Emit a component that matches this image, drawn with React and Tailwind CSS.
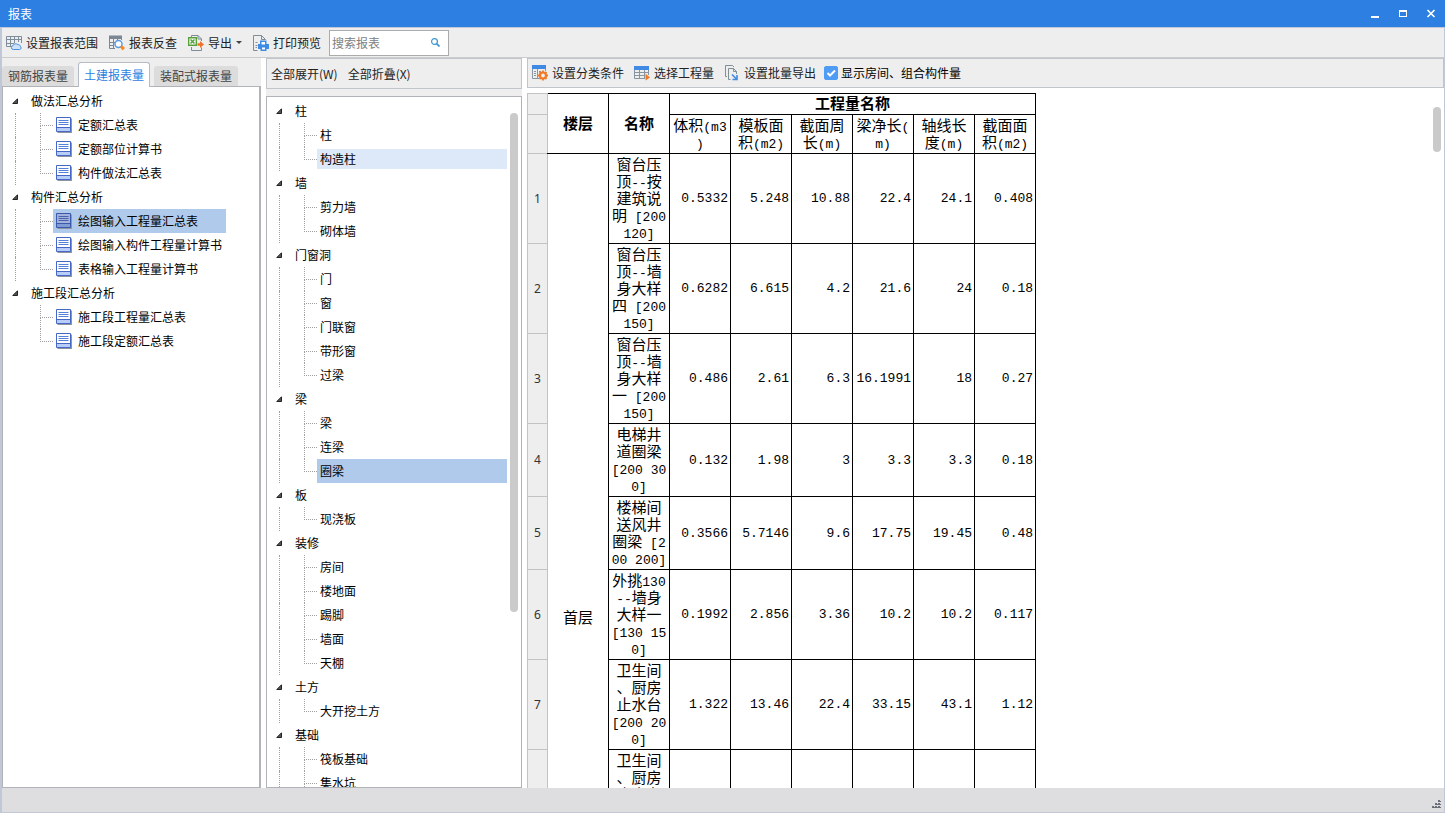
import React, { useState } from "react";

const reportGroups = [
    { name: "做法汇总分析", items: ["定额汇总表", "定额部位计算书", "构件做法汇总表"] },
    { name: "构件汇总分析", items: ["绘图输入工程量汇总表", "绘图输入构件工程量计算书", "表格输入工程量计算书"] },
    { name: "施工段汇总分析", items: ["施工段工程量汇总表", "施工段定额汇总表"], end: true },
];

const componentGroups = [
    { name: "柱", items: ["柱", "构造柱"] },
    { name: "墙", items: ["剪力墙", "砌体墙"] },
    { name: "门窗洞", items: ["门", "窗", "门联窗", "带形窗", "过梁"] },
    { name: "梁", items: ["梁", "连梁", "圈梁"] },
    { name: "板", items: ["现浇板"] },
    { name: "装修", items: ["房间", "楼地面", "踢脚", "墙面", "天棚"] },
    { name: "土方", items: ["大开挖土方"] },
    { name: "基础", items: ["筏板基础", "集水坑"], open: true },
];

const columns = [
    ["体积(m3", ")"],
    ["模板面", "积(m2)"],
    ["截面周", "长(m)"],
    ["梁净长(", "m)"],
    ["轴线长", "度(m)"],
    ["截面面", "积(m2)"],
];

const rows = [
    { name: ["窗台压", "顶--按", "建筑说", "明 [200", "120]"], values: ["0.5332", "5.248", "10.88", "22.4", "24.1", "0.408"] },
    { name: ["窗台压", "顶--墙", "身大样", "四 [200", "150]"], values: ["0.6282", "6.615", "4.2", "21.6", "24", "0.18"] },
    { name: ["窗台压", "顶--墙", "身大样", "一 [200", "150]"], values: ["0.486", "2.61", "6.3", "16.1991", "18", "0.27"] },
    { name: ["电梯井", "道圈梁", "[200 30", "0]"], values: ["0.132", "1.98", "3", "3.3", "3.3", "0.18"] },
    { name: ["楼梯间", "送风井", "圈梁 [2", "00 200]"], values: ["0.3566", "5.7146", "9.6", "17.75", "19.45", "0.48"] },
    { name: ["外挑130", "--墙身", "大样一", "[130 15", "0]"], values: ["0.1992", "2.856", "3.36", "10.2", "10.2", "0.117"] },
    { name: ["卫生间", "、厨房", "止水台", "[200 20", "0]"], values: ["1.322", "13.46", "22.4", "33.15", "43.1", "1.12"] },
    { name: ["卫生间", "、厨房", "止水台", "[200 15", "0]"], values: ["", "", "", "", "", ""] },
];

// Latin characters are set in a narrower mono face than the Chinese ones
const Lines = ({ lines }) =>
    lines.map((line, i) => (
        <div key={i} className="h-[17px] whitespace-pre">
            {line.split(/([\x20-\x7e]+)/).filter(Boolean).map((part, j) =>
                /^[\x20-\x7e]/.test(part) ? (
                    <span key={j} className="font-['Liberation_Mono',monospace] text-[13px] leading-none">{part}</span>
                ) : (
                    part
                )
            )}
        </div>
    ));

const RangeIcon = () => (
    <svg className="size-4" viewBox="0 0 16 16" fill="none" stroke="#7f8c99">
        <path d="M9 11.5H.5V1.5H15.5V8M.5 4.5H15.5M.5 8.5H8M4.5 1.5V11M8.5 1.5V8M12.5 1.5V7" />
        <path d="M7.5 14.5a2 2 0 0 1-.3-4c.5-2 3.500-2.300 4.600-.8 1.600-.3 2.400.6 2.300 1.600 1.600.6 1.300 3.200-.6 3.200z" fill="#cfe3fb" stroke="#4a8fe0" />
    </svg>
);

const LookupIcon = () => (
    <svg className="size-4" viewBox="0 0 16 16" fill="none">
        <path d="M0 .5H13V4H0z" fill="#7b8794" />
        <path d="M.5 4V13.500H6M.5 7.500H6M.5 10.500H5M4.500 4V13M8.500 4V5M12.500 4V5" stroke="#7b8794" />
        <circle cx="9.500" cy="9" r="3.500" fill="#fff" stroke="#5a9be8" strokeWidth="1.500" />
        <path d="M11 12l2.500-1.500L16 13l-2.500 2.500z" fill="#f58a1f" />
    </svg>
);

const ExportIcon = () => (
    <svg className="size-4" viewBox="0 0 16 16" fill="none">
        <path d="M3.500 3V.5H10L13.500 4V6M10 .5V4H13.500M3.500 12V15.500H13.500V12.500" stroke="#7f8c99" />
        <path d="M.7 2.700H8.300V10.300H.7z" fill="#fff" stroke="#57a03c" strokeWidth="1.400" />
        <path d="M2.500 4.500l4 4M6.500 4.500l-4 4" stroke="#57a03c" strokeWidth="1.500" />
        <path d="M9.500 8.200H12V6l4 3.500-4 3.500v-2.200H9.500z" fill="#ee7328" />
    </svg>
);

const PrintIcon = () => (
    <svg className="size-4" viewBox="0 0 16 16" fill="none">
        <path d="M4.500 15.500H.5V.5H8.500L12.500 4.500M8.500 .5V4.500H12.500" stroke="#7f8c99" />
        <path d="M2.500 7.500H4.500M2.500 10.500H4.500M2.500 12.500H4" stroke="#8a8f96" />
        <path d="M7 5.500H13.500V9H16V14H13.500V16H7.500V14H5V9H7z" fill="#3f8ae2" />
        <path d="M8.500 7H12V9.500H8.500zM9 12.500H12V14.500H9z" fill="#fff" />
    </svg>
);

const ClassifyIcon = () => (
    <svg className="size-4" viewBox="0 0 16 16" fill="none">
        <path d="M.5 2V13.500H7M5.500 4V13M13.500 4V6M2 6.500H4M2 8.500H4M2 10.500H4M7 6.500H9" stroke="#8894a0" />
        <path d="M0 0H14V4H0z" fill="#3f8ae2" />
        <circle cx="11" cy="10.500" r="3" stroke="#f07a26" strokeWidth="2.200" />
        <path d="M11 5.500v2M11 13.500v2M6 10.500h2M14 10.500h2M7.500 7l1.300 1.300M13.200 12.700l1.300 1.300M14.500 7l-1.300 1.300M8.800 12.700l-1.300 1.300" stroke="#f07a26" strokeWidth="1.800" />
    </svg>
);

const PickIcon = () => (
    <svg className="size-4" viewBox="0 0 16 16" fill="none">
        <path d="M.5 4V13.500H11M.5 7.500H14.500M.5 10.500H11M5.500 5V13M10.500 5V13M14.500 4V10" stroke="#8894a0" />
        <path d="M0 1H15V5H0z" fill="#3f8ae2" />
        <path d="M11.500 8.500L16 12.500 11.500 15.500z" fill="#f07a26" />
    </svg>
);

const BatchIcon = () => (
    <svg className="size-4" viewBox="0 0 16 16" fill="none">
        <path d="M3 11.500H1.500V.5H8.500L10 2M6.500 14.500H4.500V3.500H9.500L12.500 6.500V9M9.500 3.500V6.500H12.500" stroke="#7f8f94" />
        <path d="M8 9.500l4 4M13 10V14.500H8.500" stroke="#3f8ae2" strokeWidth="1.600" />
    </svg>
);

const SheetIcon = ({ selected }) => (
    <svg className="size-4 shrink-0" viewBox="0 0 16 16" fill="none">
        <path d="M1.500 1.500H16V16H1.500z" fill="#8f96a3" />
        <path d="M.5 .5H14.500V14.500H.5z" fill={selected ? "#a3b2dc" : "#fff"} />
        <path d="M1 10.500H14V14H1z" fill={selected ? "#7f9bd6" : "#b9cdfb"} />
        <path d="M.5 .5H14.500V14.500H.5zM1 10.500H14" stroke={selected ? "#3c58a8" : "#4468c4"} />
        <path d="M2.500 3.500H12.500M2.500 5.500H12.500M2.500 7.500H12.500" stroke={selected ? "#4863ab" : "#5b80d8"} />
    </svg>
);

const ToolButton = ({ icon, children }) => (
    <button type="button" className="flex items-center gap-1 whitespace-nowrap">
        {icon}
        {children}
    </button>
);

const Tree = ({ groups, selected, hovered, onSelect, icons }) => (
    <ul>
        {groups.map((group) => (
            <li key={group.name}>
                <button type="button" className="flex h-6 items-center pl-[9px]">
                    <svg className="mr-[13px] size-[6px]" viewBox="0 0 6 6">
                        <path d="M5.500 .8V5.500H.8z" fill="#555" stroke="#222" />
                    </svg>
                    {group.name}
                </button>
                <ul className="flex flex-col">
                    {group.items.map((item, i) => {
                        const last = i === group.items.length - 1 && !group.open;
                        const active = item === selected;
                        return (
                            <li key={item} className="flex h-6 pl-3">
                                <div className={`w-[25px] shrink-0 border-l border-dotted ${group.end ? "border-transparent" : "border-[#a0a0a0]"}`} />
                                <div className="flex w-[13px] shrink-0 flex-col">
                                    <div className="h-[13px] border-b border-l border-dotted border-[#a0a0a0]" />
                                    {!last && <div className="flex-1 border-l border-dotted border-[#a0a0a0]" />}
                                </div>
                                <button
                                    type="button"
                                    onClick={() => onSelect(item)}
                                    className={`flex flex-1 items-center gap-[6px] pr-1 pl-[3px] whitespace-nowrap ${active ? "bg-[#b0caec]" : ""} ${item === hovered ? "my-[2px] bg-[#dde8f9]" : ""}`}
                                >
                                    {icons && <SheetIcon selected={active} />}
                                    {item}
                                </button>
                            </li>
                        );
                    })}
                </ul>
            </li>
        ))}
    </ul>
);

const App = () => {
    const [report, setReport] = useState("绘图输入工程量汇总表");
    const [component, setComponent] = useState("圈梁");
    const [search, setSearch] = useState("");
    const [showRooms, setShowRooms] = useState(true);

    return (
        <div className="flex h-screen flex-col overflow-hidden bg-white font-['Noto_Sans_CJK_SC',sans-serif] text-xs text-black">
            {/* 标题栏 */}
            <header className="flex h-[27px] shrink-0 items-center justify-between bg-[#2d80e2] pl-2 text-white">
                <h1>报表</h1>
                <div className="flex">
                    <button type="button" aria-label="最小化" className="flex h-[27px] w-7 items-center justify-center">
                        <svg className="size-3" viewBox="0 0 12 12"><path d="M2 8H10V10H2z" fill="#fff" /></svg>
                    </button>
                    <button type="button" aria-label="最大化" className="flex h-[27px] w-7 items-center justify-center">
                        <svg className="size-3" viewBox="0 0 12 12"><path d="M2 2H10V9H2zM3 4V8H9V4z" fill="#fff" fillRule="evenodd" /></svg>
                    </button>
                    <button type="button" aria-label="关闭" className="flex h-[27px] w-7 items-center justify-center">
                        <svg className="size-3" viewBox="0 0 12 12"><path d="M2.500 2l7 7M9.500 2l-7 7" stroke="#fff" strokeWidth="1.600" /></svg>
                    </button>
                </div>
            </header>

            <div className="flex min-h-0 flex-1 flex-col border-r border-b border-l-2 border-[#c0c7d6]">
                {/* 主工具栏 */}
                <div className="flex h-[31px] shrink-0 items-center gap-[11px] border-t border-b border-t-[#c0c7d6] border-b-[#cccccc] bg-[#eeeeee] pl-1 text-[#222]">
                    <ToolButton icon={<RangeIcon />}>设置报表范围</ToolButton>
                    <ToolButton icon={<LookupIcon />}>报表反查</ToolButton>
                    <ToolButton icon={<ExportIcon />}>
                        导出
                        <svg className="h-[3px] w-[6px]" viewBox="0 0 6 3"><path d="M0 0H6L3 3z" fill="#444" /></svg>
                    </ToolButton>
                    <div className="flex items-center gap-2">
                        <ToolButton icon={<PrintIcon />}>打印预览</ToolButton>
                        <div className="flex h-[26px] w-[120px] items-center border border-[#ababab] bg-white pr-2">
                            <input
                                type="text"
                                aria-label="搜索报表"
                                placeholder="搜索报表"
                                value={search}
                                onChange={(e) => setSearch(e.target.value)}
                                className="min-w-0 flex-1 pl-[2px] outline-none placeholder:text-[#808080]"
                            />
                            <svg className="size-[9px]" viewBox="0 0 9 9" fill="none" stroke="#3a96d0">
                                <circle cx="3.500" cy="3.500" r="2.900" strokeWidth="1.200" />
                                <path d="M5.800 5.800L8.500 8.500" strokeWidth="1.700" />
                            </svg>
                        </div>
                    </div>
                </div>

                <div className="flex min-h-0 flex-1">
                    {/* 报表列表 */}
                    <aside className="flex w-[259px] shrink-0 flex-col bg-[#eeeeee]">
                        <div className="flex h-7 items-end gap-1 text-[#444]">
                            <button type="button" className="h-5 rounded-t-[3px] bg-[#dcdcdc] px-[6px]">钢筋报表量</button>
                            <button type="button" className="relative z-10 -mb-px h-[25px] rounded-t-[3px] border border-b-0 border-[#b4bac6] bg-white px-[5px] text-[#2d80e2]">土建报表量</button>
                            <button type="button" className="h-5 rounded-t-[3px] bg-[#dcdcdc] px-[6px]">装配式报表量</button>
                        </div>
                        <div className="flex min-h-0 flex-1 items-start overflow-hidden border border-r-2 border-[#b0b3b8] bg-white pt-[2px]">
                            <Tree groups={reportGroups} selected={report} onSelect={setReport} icons />
                        </div>
                    </aside>

                    {/* 构件树 */}
                    <section className="ml-[5px] flex w-[256px] shrink-0 flex-col bg-[#eeeeee]">
                        <div className="mb-[7px] flex h-[31px] shrink-0 items-center gap-[10px] border border-[#c0c5cc] pl-1 text-[#222]">
                            <button type="button">全部展开(W)</button>
                            <button type="button">全部折叠(X)</button>
                        </div>
                        <div className="relative min-h-0 flex-1 overflow-hidden border border-[#b0b3b8] bg-white pt-[2px] pr-[14px]">
                            <Tree groups={componentGroups} selected={component} hovered="构造柱" onSelect={setComponent} />
                            <div className="absolute top-4 right-[3px] h-[499px] w-2 rounded-full bg-[#cacaca]" />
                        </div>
                    </section>

                    {/* 工程量表 */}
                    <main className="relative ml-[5px] flex min-w-0 flex-1 flex-col">
                        <div className="flex h-[30px] shrink-0 items-center gap-2 border border-[#c0c5cc] bg-[#eeeeee] pl-1 text-[#222]">
                            <div className="flex items-center gap-[10px]">
                                <ToolButton icon={<ClassifyIcon />}>设置分类条件</ToolButton>
                                <ToolButton icon={<PickIcon />}>选择工程量</ToolButton>
                                <ToolButton icon={<BatchIcon />}>设置批量导出</ToolButton>
                            </div>
                            <label className="flex items-center gap-[3px] whitespace-nowrap text-black">
                                <span className="relative size-[14px]">
                                    <input
                                        type="checkbox"
                                        checked={showRooms}
                                        onChange={(e) => setShowRooms(e.target.checked)}
                                        className="block size-[14px] appearance-none rounded-[2px] border border-[#4f9cf5] bg-white checked:bg-[#4f9cf5]"
                                    />
                                    <svg className="pointer-events-none absolute inset-0" viewBox="0 0 14 14" fill="none">
                                        <path d="M3.500 7l2.500 2.500 5-5" stroke="#fff" strokeWidth="2" />
                                    </svg>
                                </span>
                                显示房间、组合构件量
                            </label>
                        </div>

                        <div className="min-h-0 flex-1 overflow-hidden pt-[5px]">
                            <table className="w-[509px] table-fixed border-collapse text-center text-[15px] leading-[17px]">
                                <colgroup>
                                    <col className="w-[20px]" />
                                    <col className="w-[61px]" />
                                    <col className="w-[61px]" />
                                    {columns.map((c, i) => <col key={i} className="w-[61px]" />)}
                                </colgroup>
                                <thead>
                                    <tr>
                                        <td className="h-[21px] border border-[#c3c3c3] bg-[#eeeeee] p-0" />
                                        <th rowSpan={2} className="border border-black border-l-[#c3c3c3] px-0 pt-0 pb-[3px]">楼层</th>
                                        <th rowSpan={2} className="border border-black px-0 pt-0 pb-[3px]">名称</th>
                                        <th colSpan={6} className="h-[21px] border border-black px-0 pt-0 pb-[3px]">工程量名称</th>
                                    </tr>
                                    <tr>
                                        <td className="border border-[#c3c3c3] bg-[#eeeeee] p-0" />
                                        {columns.map((c, i) => (
                                            <th key={i} className="border border-black px-0 pt-[1px] pb-[3px] font-normal">
                                                <Lines lines={c} />
                                            </th>
                                        ))}
                                    </tr>
                                </thead>
                                <tbody>
                                    {rows.map((row, index) => (
                                        <tr key={index}>
                                            <td className="border border-[#c3c3c3] bg-[#eeeeee] p-0 font-['Noto_Sans',sans-serif] text-xs text-[#333]">{index + 1}</td>
                                            {index === 0 && (
                                                <td rowSpan={rows.length + 1} className="border border-black border-l-[#c3c3c3] p-0">首层</td>
                                            )}
                                            <td className="border border-black px-0 pt-[1px] pb-[3px]">
                                                <Lines lines={row.name} />
                                            </td>
                                            {row.values.map((v, i) => (
                                                <td key={i} className="border border-black py-0 pr-[2px] pl-0 text-right font-['Liberation_Mono',monospace] text-[13px] leading-[17px]">{v}</td>
                                            ))}
                                        </tr>
                                    ))}
                                    <tr>
                                        <td className="h-[240px] border border-[#c3c3c3] bg-[#eeeeee]" />
                                        <td colSpan={7} className="border border-black" />
                                    </tr>
                                </tbody>
                            </table>
                        </div>
                        <div className="absolute top-[49px] right-[3px] h-[45px] w-2 rounded-full bg-[#cacaca]" />
                    </main>
                </div>

                {/* 状态栏 */}
                <footer className="flex h-6 shrink-0 items-end justify-end bg-[#dedee0] p-[3px]">
                    <svg className="size-[9px]" viewBox="0 0 9 9" fill="#6b7078">
                        <path d="M6 0h2v2H6zM3 3h2v2H3zM6 3h2v2H6zM0 6h2v2H0zM3 6h2v2H3zM6 6h2v2H6z" />
                        <path d="M8 1h1v1H8zM5 4h1v1H5zM8 4h1v1H8zM2 7h1v1H2zM5 7h1v1H5zM8 7h1v1H8z" />
                    </svg>
                </footer>
            </div>
        </div>
    );
};

export default App;
